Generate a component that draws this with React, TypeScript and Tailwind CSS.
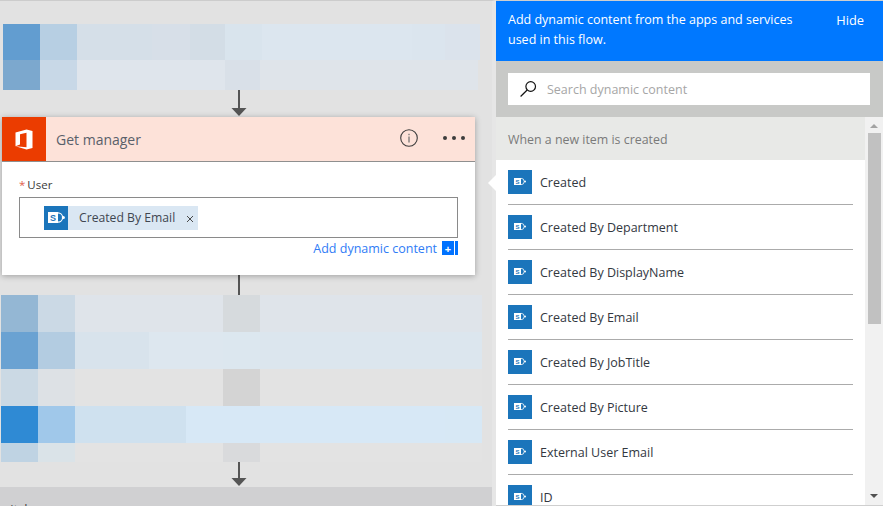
const topRows = [
  {
    h: 'h-[36px]',
    cells: [
      'w-[37px] bg-[#629dd0]',
      'w-[37px] bg-[#b7cfe3]',
      'w-[75px] bg-[#d5dfe8]',
      'w-[38px] bg-[#d7dfe8]',
      'w-[35px] bg-[#d3dde6]',
      'w-[37px] bg-[#d9e4ed]',
      'w-[150px] bg-[#dce6ef]',
      'w-[33px] bg-[#dbe5ee]',
      'w-[35px] bg-[#dbe3ec]',
    ],
  },
  {
    h: 'h-[30px]',
    cells: [
      'w-[37px] bg-[#7ca8ce]',
      'w-[37px] bg-[#c8d8e7]',
      'w-[148px] bg-[#dfe5ec]',
      'w-[35px] bg-[#d9e0e8]',
      'w-[218px] bg-[#dfe4ea]',
    ],
  },
];

const bottomRows = [
  {
    h: 'h-[37px]',
    cells: [
      'w-[37px] bg-[#94b7d4]',
      'w-[37px] bg-[#cbd9e5]',
      'w-[148px] bg-[#dfe4ea]',
      'w-[37px] bg-[#d6dadd]',
      'w-[222px] bg-[#dfe4ea]',
    ],
  },
  {
    h: 'h-[37px]',
    cells: [
      'w-[37px] bg-[#6aa2d2]',
      'w-[37px] bg-[#b3cce1]',
      'w-[74px] bg-[#d8e3ec]',
      'w-[74px] bg-[#dde7ef]',
      'w-[37px] bg-[#dce7ef]',
      'w-[222px] bg-[#dce6ee]',
    ],
  },
  {
    h: 'h-[37px]',
    cells: [
      'w-[37px] bg-[#cbd9e4]',
      'w-[37px] bg-[#dde1e5]',
      'w-[148px] bg-[#e3e3e3]',
      'w-[37px] bg-[#d4d4d4]',
      'w-[222px] bg-[#e3e3e3]',
    ],
  },
  {
    h: 'h-[37px]',
    cells: [
      'w-[37px] bg-[#2f8ad4]',
      'w-[37px] bg-[#a0c8ea]',
      'w-[111px] bg-[#cfe1ef]',
      'w-[259px] bg-[#d7e8f6]',
      'w-[37px] bg-[#d7e8f5]',
    ],
  },
  {
    h: 'h-[19px]',
    cells: [
      'w-[37px] bg-[#bfd3e3]',
      'w-[37px] bg-[#dae3e8]',
      'w-[148px] bg-[#e3e3e3]',
      'w-[37px] bg-[#d9dadc]',
      'w-[222px] bg-[#e3e3e3]',
    ],
  },
];

const fields = [
  'Created',
  'Created By Department',
  'Created By DisplayName',
  'Created By Email',
  'Created By JobTitle',
  'Created By Picture',
  'External User Email',
  'ID',
];

function BlurRows({ rows, className }: { rows: typeof topRows; className: string }) {
  return (
    <div className={className}>
      {rows.map((row, i) => (
        <div key={i} className={`flex ${row.h}`}>
          {row.cells.map((c, j) => (
            <div key={j} className={c} />
          ))}
        </div>
      ))}
    </div>
  );
}

function DownArrow({ height }: { height: number }) {
  return (
    <svg width="16" height={height} viewBox={`0 0 16 ${height}`} className="block">
      <rect x="7" y="0" width="2" height={height - 5} fill="#555555" />
      <path d={`M0.5 ${height - 9}H15.5L8 ${height - 1}Z`} fill="#555555" />
    </svg>
  );
}

function SharePointIcon({ large }: { large?: boolean }) {
  return (
    <div className="flex h-6 w-6 shrink-0 items-center justify-center bg-[#1b75bb]">
      {large ? (
        <svg width="17" height="13" viewBox="0 0 17 13">
          <circle cx="10" cy="6.5" r="4.6" fill="none" stroke="#ffffff" strokeWidth="1.1" />
          <circle cx="15.4" cy="6.5" r="1.5" fill="#ffffff" />
          <rect x="0" y="1" width="10" height="11" fill="#ffffff" />
          <text x="5" y="10" textAnchor="middle" fontSize="9" fontWeight="700" fill="#1b75bb" fontFamily="Liberation Sans, sans-serif">
            S
          </text>
        </svg>
      ) : (
        <svg width="12" height="9" viewBox="0 0 12 9">
          <circle cx="7" cy="4.5" r="3.2" fill="none" stroke="#dbe9f4" strokeWidth="0.9" />
          <circle cx="11" cy="4.5" r="1" fill="#ffffff" />
          <rect x="0" y="1" width="7" height="7" fill="#ffffff" />
          <text x="3.5" y="7" textAnchor="middle" fontSize="6" fontWeight="700" fill="#1b75bb" fontFamily="Liberation Sans, sans-serif">
            S
          </text>
        </svg>
      )}
    </div>
  );
}

function OfficeIcon() {
  return (
    <svg width="18" height="21" viewBox="0 0 18 21">
      <path
        d="M0.5 3.6L11.5 0.4L17.5 2V19L11.5 20.6L0.5 17.2L11.5 18.2V3.8L5 5.2V15.4L0.5 17.2Z"
        fill="#ffffff"
      />
    </svg>
  );
}

function Card() {
  return (
    <div className="relative z-10 ml-[2px] h-[158px] w-[473px] bg-white shadow-[0_1px_6px_rgba(0,0,0,0.3)]">
      <div className="flex h-[45px] items-center border-b border-[#8f8f8f] bg-[#fde2d9]">
        <div className="flex h-[44px] w-[44px] items-center justify-center bg-[#eb3c00]">
          <OfficeIcon />
        </div>
        <span className="ml-[10px] mt-[1px] text-[14px] text-[#59606a]">Get manager</span>
        <svg width="18" height="18" viewBox="0 0 18 18" className="ml-auto mr-[25px] -mt-[3px]">
          <circle cx="9" cy="9" r="8.3" fill="none" stroke="#3c3c3c" strokeWidth="1.1" />
          <rect x="8.4" y="7.5" width="1.2" height="6" fill="#6b6b6b" />
          <rect x="8.4" y="4.8" width="1.2" height="1.4" fill="#6b6b6b" />
        </svg>
        <div className="mr-[10px] -mt-[2px] flex gap-[5px]">
          <span className="h-[4px] w-[4px] rounded-full bg-[#3c3c3c]" />
          <span className="h-[4px] w-[4px] rounded-full bg-[#3c3c3c]" />
          <span className="h-[4px] w-[4px] rounded-full bg-[#3c3c3c]" />
        </div>
      </div>
      <div className="px-[17px] pt-[13px]">
        <div className="flex h-[20px] items-center text-[11.5px] text-[#3b3b3b]">
          <span className="mr-[2px] text-[#e2604a]">*</span>User
        </div>
        <div className="mt-[2px] flex h-[41px] items-center border border-[#8a8a8a] pl-[24px]">
          <div className="flex h-6 w-[154px] items-center bg-[#dae7f3]">
            <SharePointIcon large />
            <span className="ml-[11px] mt-[1px] text-[12.2px] text-[#3f4650]">Created By Email</span>
            <svg width="8" height="8" viewBox="0 0 8 8" className="ml-auto mr-[4px] mt-[2px]">
              <path d="M1 1L7 7M7 1L1 7" stroke="#4a4a4a" strokeWidth="1" />
            </svg>
          </div>
        </div>
        <div className="mt-[3px] flex h-[14px] items-center justify-end">
          <span className="mt-[2px] text-[12.5px] text-[#2f7cf6]">Add dynamic content</span>
          <div className="ml-[5px] flex h-[14px] w-[12px] items-center justify-center bg-[#0072ff] text-[11px] font-bold leading-none text-white">
            +
          </div>
          <div className="ml-[1px] h-[14px] w-[3px] bg-[#0072ff]" />
        </div>
      </div>
    </div>
  );
}

function Panel() {
  return (
    <aside className="relative flex h-[506px] w-[387px] flex-col border-t border-b border-[#cfcfcf] bg-white">
      {/* notch pointing at the card */}
      <div className="absolute -left-[8px] top-[174px] h-0 w-0 border-y-[8px] border-r-[8px] border-y-transparent border-r-white" />

      <div className="flex h-[60px] items-start justify-between bg-[#0078ff] pl-[12px] pr-[19px] pt-[9px] text-[12.5px] leading-[20px] text-white">
        <p className="w-[310px]">Add dynamic content from the apps and services used in this flow.</p>
        <span className="text-[12.8px]">Hide</span>
      </div>

      <div className="h-[56px] bg-[#c8c9c7] px-[12px] pt-[12px]">
        <div className="flex h-[32px] w-[362px] items-center bg-white pl-[12px]">
          <svg width="17" height="16" viewBox="0 0 17 16" fill="none" stroke="#111111" strokeWidth="1.2">
            <circle cx="10.7" cy="5.5" r="4.8" />
            <path d="M7.2 9L0.6 15.5" />
          </svg>
          <span className="ml-[10px] mt-[2px] text-[12.5px] text-[#a6a6a6]">Search dynamic content</span>
        </div>
      </div>

      <div className="flex min-h-0 flex-1">
        <div className="min-w-0 flex-1 overflow-hidden">
          <div className="flex h-[43px] items-center bg-[#e8e9e7] pl-[12px] pt-[4px] text-[12.4px] text-[#7a7a7a]">
            When a new item is created
          </div>
          {fields.map((f) => (
            <div key={f} className="mx-[12px] flex h-[45px] shrink-0 items-center border-b border-[#ababab] pb-[1px]">
              <SharePointIcon />
              <span className="ml-[8px] mt-[4px] text-[12.5px] text-[#33383f]">{f}</span>
            </div>
          ))}
        </div>
        <div className="flex w-[18px] shrink-0 flex-col items-center bg-[#f1f1f1]">
          <div className="mt-[7px] h-0 w-0 border-x-[4px] border-b-[4px] border-x-transparent border-b-[#a3a3a3]" />
          <div className="mt-[5px] h-[191px] w-[13px] bg-[#c1c1c1]" />
          <div className="mt-auto mb-[7px] h-0 w-0 border-x-[4px] border-t-[4px] border-x-transparent border-t-[#505050]" />
        </div>
      </div>
    </aside>
  );
}

export default function App() {
  return (
    <div className="flex h-[506px] w-[883px] overflow-hidden bg-[#e2e2e2] font-['Open_Sans',sans-serif]">
      <main className="flex h-full w-[496px] shrink-0 flex-col border-t border-r-[4px] border-t-[#cccccc] border-r-[#e6e6e6] pt-[23px]">
        <BlurRows rows={topRows} className="ml-[3px]" />
        <div className="ml-[231px]">
          <DownArrow height={27} />
        </div>
        <Card />
        <div className="ml-[238px] h-[20px] w-[2px] bg-[#555555]" />
        <BlurRows rows={bottomRows} className="ml-[1px]" />
        <div className="ml-[231px]">
          <DownArrow height={25} />
        </div>
        <div className="min-h-0 flex-1 overflow-hidden bg-[#d0d0d2] pt-[13px] text-[13px] text-[#444444]">
          <span className="-ml-[7px] block">Switch</span>
        </div>
      </main>
      <Panel />
    </div>
  );
}
